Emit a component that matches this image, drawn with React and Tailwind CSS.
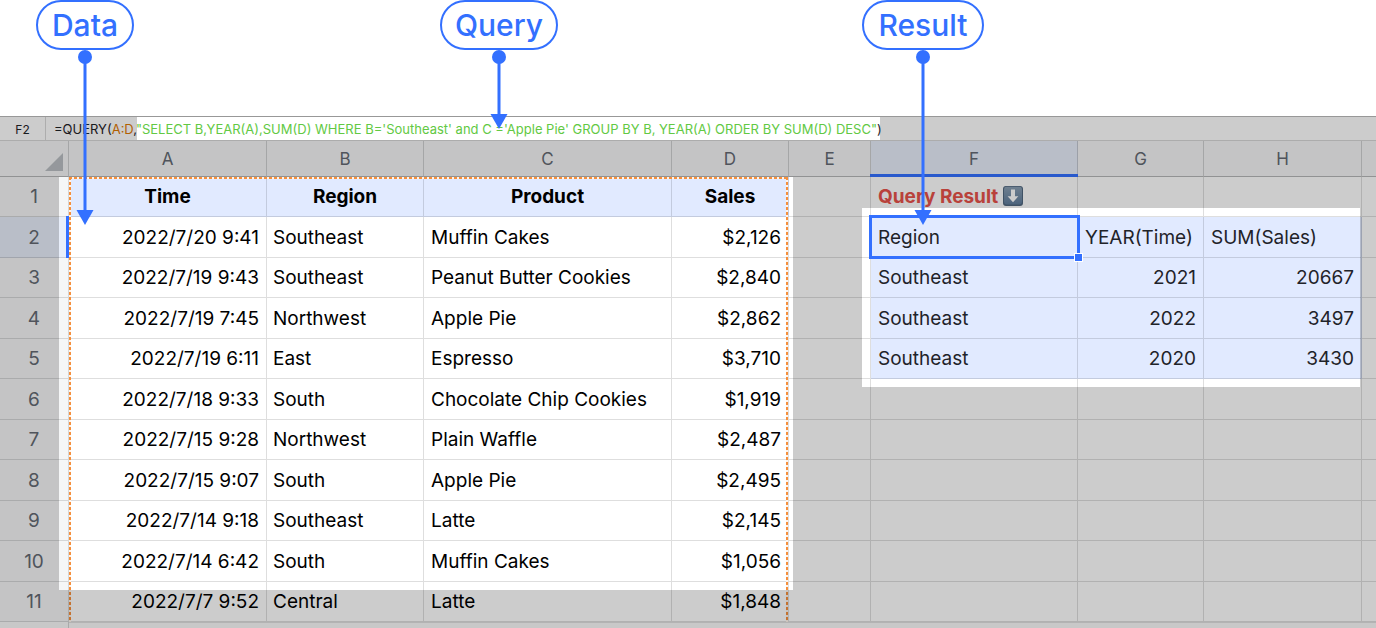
const ORANGE_X =
  "bg-[repeating-linear-gradient(90deg,#f58f3c_0_3px,#fff4ea_3px_5px)]";
const ORANGE_Y =
  "bg-[repeating-linear-gradient(180deg,#f58f3c_0_3px,#fff4ea_3px_5px)]";

const columns = [
  ["A", "w-[198px]"],
  ["B", "w-[157px]"],
  ["C", "w-[248px]"],
  ["D", "w-[117px]"],
  ["E", "w-[82px]"],
  ["F", "w-[207px]"],
  ["G", "w-[126px]"],
  ["H", "w-[158px]"],
  ["", ""],
];

const sales = [
  ["2022/7/20 9:41", "Southeast", "Muffin Cakes", "$2,126"],
  ["2022/7/19 9:43", "Southeast", "Peanut Butter Cookies", "$2,840"],
  ["2022/7/19 7:45", "Northwest", "Apple Pie", "$2,862"],
  ["2022/7/19 6:11", "East", "Espresso", "$3,710"],
  ["2022/7/18 9:33", "South", "Chocolate Chip Cookies", "$1,919"],
  ["2022/7/15 9:28", "Northwest", "Plain Waffle", "$2,487"],
  ["2022/7/15 9:07", "South", "Apple Pie", "$2,495"],
  ["2022/7/14 9:18", "Southeast", "Latte", "$2,145"],
  ["2022/7/14 6:42", "South", "Muffin Cakes", "$1,056"],
  ["2022/7/7 9:52", "Central", "Latte", "$1,848"],
];

const results = [
  ["Region", "YEAR(Time)", "SUM(Sales)"],
  ["Southeast", "2021", "20667"],
  ["Southeast", "2022", "3497"],
  ["Southeast", "2020", "3430"],
];

const CELL = "border-r border-b border-black/13 pt-[2px]";

function Callout({ label, place, width, length }) {
  return (
    <div
      className={`absolute top-0 z-20 flex -translate-x-1/2 flex-col items-center ${place}`}
    >
      <div
        className={`flex h-[50px] items-center justify-center rounded-full border-2 border-[#3370ff] bg-white pt-px text-[30px] font-medium text-[#3370ff] ${width}`}
      >
        {label}
      </div>
      <svg width="18" height={length} aria-hidden="true" fill="#3370ff">
        <circle cx="9" cy="7" r="7" />
        <rect x="7.5" y="7" width="3" height={length - 18} />
        <path d={`M0.5 ${length - 15}H17.5L9 ${length}Z`} />
      </svg>
    </div>
  );
}

function DownArrowEmoji() {
  return (
    <svg
      className="inline-block align-[-3px]"
      width="20"
      height="20"
      viewBox="0 0 20 20"
      role="img"
      aria-label="down arrow"
    >
      <defs>
        <linearGradient id="key" x1="0" y1="0" x2="0" y2="1">
          <stop offset="0" stopColor="#8ba0b4" />
          <stop offset="1" stopColor="#607d9c" />
        </linearGradient>
      </defs>
      <rect width="20" height="20" rx="3" fill="#50677f" />
      <rect x="1" y="0.8" width="18" height="17.6" rx="2.4" fill="url(#key)" />
      <path d="M8 3.6h4v6.6h3.4L10 16.2 4.6 10.2H8Z" fill="#fff" />
    </svg>
  );
}

function SheetRow({ index, row }) {
  const height = index % 2 === 0 ? "h-[40px]" : "h-[41px]";
  const result = results[index - 1];
  const tint = result ? "bg-[#e1eaff]" : "";
  return (
    <tr className={height}>
      <th
        scope="row"
        className={`relative ${CELL} font-normal text-[#646a73] ${
          index === 1 ? "bg-[#e8eefa]" : "bg-[#f5f6f7]"
        }`}
      >
        {index + 1}
        {index === 1 && (
          <span className="absolute -top-px -right-px -bottom-px w-[3px] bg-[#3370ff]" />
        )}
      </th>
      <td className={`${CELL} px-[7px] text-right`}>{row[0]}</td>
      <td className={`${CELL} px-[6px]`}>{row[1]}</td>
      <td className={`${CELL} px-[7px]`}>{row[2]}</td>
      <td className={`${CELL} px-[7px] text-right`}>{row[3]}</td>
      <td className={CELL} />
      <td className={`relative ${CELL} ${tint} px-[7px] text-[#1f2329]`}>
        {result?.[0]}
        {index === 1 && (
          <span className="absolute -top-[2px] -right-[3px] -bottom-[2px] -left-[2px] z-10 border-[3px] border-[#3370ff]">
            <span className="absolute -right-[6px] -bottom-[6px] size-[9px] border border-white bg-[#3370ff]" />
          </span>
        )}
      </td>
      <td
        className={`${CELL} ${tint} px-[7px] text-[#1f2329] ${index > 1 ? "text-right" : ""}`}
      >
        {result?.[1]}
      </td>
      <td
        className={`${CELL} ${tint} px-[7px] text-[#1f2329] ${index > 1 ? "text-right" : ""}`}
      >
        {result?.[2]}
      </td>
      <td className="border-b border-black/13" />
    </tr>
  );
}

export default function App() {
  return (
    <div className="relative min-h-screen overflow-hidden bg-white pt-[116px] font-[Inter,sans-serif] text-black">
      <Callout label="Data" place="left-[85px]" width="w-[98px]" length={175} />
      <Callout label="Query" place="left-[499px]" width="w-[118px]" length={79} />
      <Callout label="Result" place="left-[923px]" width="w-[122px]" length={175} />

      <main className="relative">
        <div className="flex h-[25px] items-center border-t border-b border-t-black/25 border-b-black/15 text-[13px] whitespace-nowrap">
          <span className="flex h-full w-[46px] items-center justify-center border-r border-black/15 pt-[2px] text-[12px] text-[#1f2329]">
            F2
          </span>
          <code className="pt-[2px] pl-[8px] font-[Inter,sans-serif] text-[#1f2329]">
            =QUERY(<span className="text-[#de7802]">A:D</span>,
            <span className="text-[#62c943]">
              "SELECT B,YEAR(A),SUM(D) WHERE B='Southeast' and C ='Apple Pie'
              GROUP BY B, YEAR(A) ORDER BY SUM(D) DESC"
            </span>
            )
          </code>
        </div>

        <div className="relative">
          <table className="w-full table-fixed border-separate border-spacing-0 text-[19px] whitespace-nowrap">
            <colgroup>
              <col className="w-[69px]" />
              {columns.map(([name, width]) => (
                <col key={name} className={width} />
              ))}
            </colgroup>
            <thead>
              <tr className="h-[36px] bg-[#f5f6f7] text-[17px] text-[#646a73]">
                <td className="border-r border-b border-r-black/15 border-b-black/25">
                  <svg
                    className="mt-[7px] ml-auto mr-[5px]"
                    width="18"
                    height="18"
                    aria-hidden="true"
                  >
                    <path d="M18 0V18H0Z" fill="#bbbfc4" />
                  </svg>
                </td>
                {columns.map(([name]) => (
                  <th
                    key={name}
                    scope="col"
                    className={`relative border-b border-r-black/15 border-b-black/25 pt-[2px] font-normal ${
                      name ? "border-r" : ""
                    } ${name === "F" ? "bg-[#e8eefa]" : ""}`}
                  >
                    {name}
                    {name === "F" && (
                      <span className="absolute -right-px -bottom-px -left-px h-[3px] bg-[#3370ff]" />
                    )}
                  </th>
                ))}
              </tr>
            </thead>
            <tbody>
              <tr className="h-[40px]">
                <th
                  scope="row"
                  className={`${CELL} bg-[#f5f6f7] font-normal text-[#646a73]`}
                >
                  1
                </th>
                {["Time", "Region", "Product", "Sales"].map((name) => (
                  <th key={name} className={`${CELL} bg-[#e1eaff] font-bold`}>
                    {name}
                  </th>
                ))}
                <td className={CELL} />
                <td className={`${CELL} px-[7px] font-bold text-[#e8524a]`}>
                  Query Result <DownArrowEmoji />
                </td>
                <td className={CELL} />
                <td className={CELL} />
                <td className="border-b border-black/13" />
              </tr>
              {sales.map((row, i) => (
                <SheetRow key={row[0]} index={i + 1} row={row} />
              ))}
            </tbody>
          </table>
          <div className="pointer-events-none absolute top-[36px] bottom-0 left-[69px] w-[719px]">
            <div className={`absolute top-0 left-0 h-[2px] w-full ${ORANGE_X}`} />
            <div className={`absolute top-0 left-0 h-full w-[2px] ${ORANGE_Y}`} />
            <div className={`absolute top-0 right-0 h-full w-[2px] ${ORANGE_Y}`} />
          </div>
        </div>
        <div className="flex h-[6px] bg-[#fafafa]">
          <span className="w-[69px] border-r border-black/15" />
          <span className="flex-1 border-t border-black/10" />
        </div>

        <div className="pointer-events-none absolute inset-0 bg-black/20 [clip-path:polygon(evenodd,0_0,100%_0,100%_100%,0_100%,0_0,137px_1px,880px_1px,880px_24px,137px_24px,137px_1px,0_0,59px_61px,793px_61px,793px_474px,59px_474px,59px_61px,0_0,862px_92px,1360px_92px,1360px_271px,862px_271px,862px_92px,0_0)]" />
      </main>
    </div>
  );
}
